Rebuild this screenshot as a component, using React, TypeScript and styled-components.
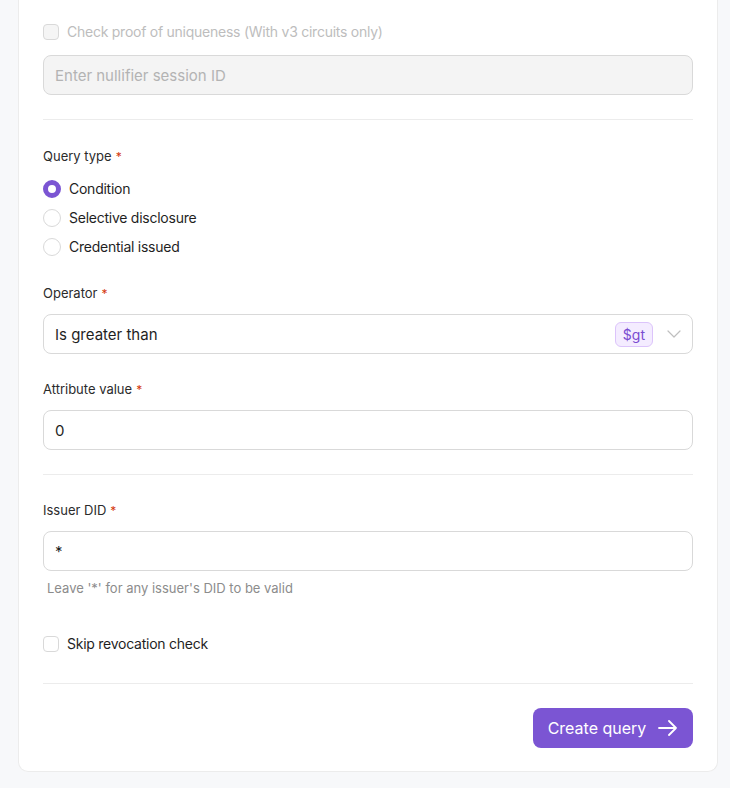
import React from "react";
import styled, { createGlobalStyle } from "styled-components";

const Global = createGlobalStyle`
  html, body { margin: 0; padding: 0; background: #f7f8fa; }
  body { font-family: Inter, "Noto Sans", sans-serif; color: #1f1f1f; -webkit-font-smoothing: antialiased; }
  * { box-sizing: border-box; }
`;

const Page = styled.div`
  padding: 0 12px 16px 18px;
`;

const Card = styled.div`
  background: #fff;
  border: 1px solid #ececec;
  border-top: none;
  border-radius: 0 0 10px 10px;
  padding: 21px 24px 23px;
  display: flex;
  flex-direction: column;
`;

const CheckRow = styled.label<{ $disabled?: boolean; $mt?: number }>`
  display: flex;
  align-items: center;
  gap: 8px;
  font-size: 14px;
  letter-spacing: -0.25px;
  line-height: 22px;
  margin-top: ${(p) => p.$mt ?? 0}px;
  color: ${(p) => (p.$disabled ? "#bdbdbd" : "#1f1f1f")};
`;

const Box = styled.span<{ $disabled?: boolean }>`
  width: 16px;
  height: 16px;
  border-radius: 4px;
  border: 1px solid #d9d9d9;
  background: ${(p) => (p.$disabled ? "#f5f5f5" : "#fff")};
  flex: none;
`;

const Input = styled.div<{ $disabled?: boolean; $mt?: number }>`
  height: 40px;
  border: 1px solid #d9d9d9;
  border-radius: 8px;
  background: ${(p) => (p.$disabled ? "#f4f4f4" : "#fff")};
  display: flex;
  align-items: center;
  padding: 0 11px;
  font-size: 15px;
  color: ${(p) => (p.$disabled ? "#b3b3b3" : "#1f1f1f")};
  margin-top: ${(p) => p.$mt ?? 0}px;
`;

const Divider = styled.div<{ $mt?: number; $mb?: number }>`
  height: 1px;
  background: #ececec;
  margin: ${(p) => p.$mt ?? 24}px 0 ${(p) => p.$mb ?? 24}px;
`;

const Field = styled.div<{ $mt?: number }>`
  display: flex;
  flex-direction: column;
  gap: 8px;
  margin-top: ${(p) => p.$mt ?? 0}px;
`;

const Label = styled.div`
  font-size: 13px;
  line-height: 24px;
  color: #2b2b2b;
`;

const Req = styled.span`
  color: #d4380d;
  margin-left: 4px;
  font-size: 12px;
`;

const RadioGroup = styled.div`
  display: flex;
  flex-direction: column;
  gap: 5px;
`;

const RadioRow = styled.label`
  display: flex;
  align-items: center;
  gap: 8px;
  font-size: 14px;
  letter-spacing: -0.25px;
  line-height: 24px;
  color: #1f1f1f;
`;

const RadioDot = styled.span<{ $on?: boolean }>`
  width: 18px;
  height: 18px;
  border-radius: 50%;
  flex: none;
  border: ${(p) => (p.$on ? "5px solid #7b55d3" : "1px solid #d9d9d9")};
  background: #fff;
`;

const SelectText = styled.span`
  flex: 1;
`;

const Badge = styled.span`
  height: 25px;
  padding: 0 7px;
  display: flex;
  align-items: center;
  border-radius: 6px;
  background: #f4ecff;
  border: 1px solid #dcc4fb;
  color: #7a4bd1;
  font-size: 14px;
  margin-right: 14px;
`;

const Help = styled.div`
  font-size: 13px;
  line-height: 18px;
  color: #8c8c8c;
  padding-left: 4px;
`;

const Footer = styled.div`
  display: flex;
  justify-content: flex-end;
`;

const Button = styled.button`
  height: 40px;
  width: 160px;
  border: none;
  border-radius: 8px;
  background: #7b55d3;
  color: #fff;
  font-family: inherit;
  font-size: 16px;
  display: flex;
  align-items: center;
  justify-content: center;
  gap: 12px;
`;

const Chevron = () => (
  <svg width="14" height="8" viewBox="0 0 14 8" fill="none">
    <path d="M1 1l6 6 6-6" stroke="#bfbfbf" strokeWidth="1.2" strokeLinecap="round" strokeLinejoin="round" />
  </svg>
);

const Arrow = () => (
  <svg width="20" height="16" viewBox="0 0 20 16" fill="none">
    <path d="M1 8h17M11 1l7 7-7 7" stroke="#fff" strokeWidth="1.8" strokeLinecap="round" strokeLinejoin="round" />
  </svg>
);

export default function App() {
  return (
    <>
      <Global />
      <Page>
        <Card>
          <CheckRow $disabled>
            <Box $disabled />
            Check proof of uniqueness (With v3 circuits only)
          </CheckRow>
          <Input $disabled $mt={12}>Enter nullifier session ID</Input>
          <Divider />
          <Field>
            <Label>
              Query type<Req>*</Req>
            </Label>
            <RadioGroup>
              <RadioRow>
                <RadioDot $on />
                Condition
              </RadioRow>
              <RadioRow>
                <RadioDot />
                Selective disclosure
              </RadioRow>
              <RadioRow>
                <RadioDot />
                Credential issued
              </RadioRow>
            </RadioGroup>
          </Field>
          <Field $mt={22}>
            <Label>
              Operator<Req>*</Req>
            </Label>
            <Input>
              <SelectText>Is greater than</SelectText>
              <Badge>$gt</Badge>
              <Chevron />
            </Input>
          </Field>
          <Field $mt={23}>
            <Label>
              Attribute value<Req>*</Req>
            </Label>
            <Input>0</Input>
          </Field>
          <Divider $mb={23} />
          <Field>
            <Label>
              Issuer DID<Req>*</Req>
            </Label>
            <Input>*</Input>
            <Help>Leave '*' for any issuer's DID to be valid</Help>
          </Field>
          <CheckRow $mt={36}>
            <Box />
            Skip revocation check
          </CheckRow>
          <Divider $mt={28} />
          <Footer>
            <Button>
              Create query
              <Arrow />
            </Button>
          </Footer>
        </Card>
      </Page>
    </>
  );
}
